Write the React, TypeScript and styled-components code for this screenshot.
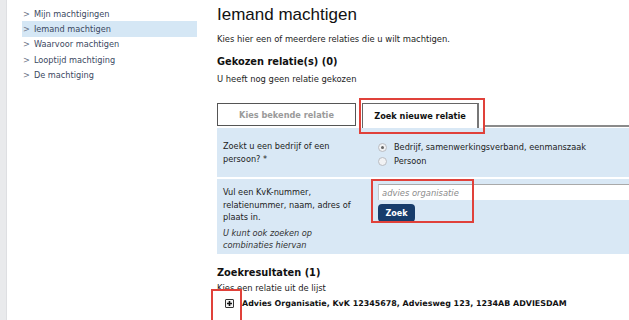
import { FC } from 'react';
import styled, { createGlobalStyle } from 'styled-components';

const GlobalStyle = createGlobalStyle`
  html, body {
    margin: 0;
    padding: 0;
    background: #ffffff;
  }
  body {
    font-family: "DejaVu Sans", Verdana, sans-serif;
    font-size: 8.2px;
    color: #222222;
  }
`;

const Page = styled.div`
  display: flex;
  width: 629px;
  height: 320px;
  overflow: hidden;
`;

const Strip = styled.div`
  width: 6px;
  flex-shrink: 0;
  background: #e9eaec;
  border-right: 1px solid #dedfe2;
`;

const Sidebar = styled.nav`
  width: 195px;
  flex-shrink: 0;
  padding: 6px 0 0 15px;
`;

const NavItem = styled.div<{ $active?: boolean }>`
  width: 175px;
  height: 15.3px;
  display: flex;
  align-items: center;
  gap: 4px;
  padding-left: 1px;
  box-sizing: border-box;
  color: #3b4861;
  font-size: 8.2px;
  background: ${(p) => (p.$active ? '#d5e7f5' : 'transparent')};
`;

const Chevron = styled.span`
  color: #6b7487;
`;

const Main = styled.main`
  flex: 1;
  min-width: 0;
  padding-top: 5px;
  position: relative;
`;

const Title = styled.h1`
  margin: 0;
  font-family: "Liberation Sans", Arial, sans-serif;
  font-weight: normal;
  font-size: 17px;
  line-height: 20px;
  color: #111111;
`;

const Text = styled.p<{ $mt?: number }>`
  margin: ${(p) => p.$mt ?? 0}px 0 0;
  font-size: 8.4px;
  line-height: 14px;
  color: #222222;
`;

const Heading = styled.h2<{ $mt?: number }>`
  margin: ${(p) => p.$mt ?? 0}px 0 0;
  font-size: 9.8px;
  line-height: 14px;
  font-weight: bold;
  color: #111111;
`;

const TabBar = styled.div`
  margin-top: 17px;
  height: 24px;
  display: flex;
  align-items: flex-end;
  gap: 6px;
  &::after {
    content: '';
    flex: 1;
    height: 0;
    border-bottom: 2px solid #8a8a8a;
  }
`;

const Tab = styled.div<{ $active?: boolean }>`
  box-sizing: border-box;
  display: flex;
  align-items: center;
  justify-content: center;
  font-weight: bold;
  font-size: 8.2px;
  ${(p) =>
    p.$active
      ? `
    width: 117px;
    height: 25px;
    color: #111111;
    background: #ffffff;
    border: 1px solid #666666;
    border-bottom: none;
    border-right: 2px solid #777777;
    margin-bottom: -1px;
  `
      : `
    width: 139px;
    height: 23px;
    color: #9a9a9a;
    background: #ffffff;
    border: 1px solid #555555;
    margin-bottom: 1px;
  `}
`;

const Panel = styled.div`
  margin-top: 1px;
  background: #d9e8f5;
`;

const Row = styled.div<{ $pt: number; $pb: number }>`
  display: grid;
  grid-template-columns: 160px 1fr;
  padding: ${(p) => p.$pt}px 0 ${(p) => p.$pb}px;
  & + & {
    border-top: 2px solid #ffffff;
  }
`;

const Label = styled.div<{ $pt?: number }>`
  padding: ${(p) => p.$pt ?? 0}px 0 0 6px;
  line-height: 12.5px;
  color: #222222;
`;

const Hint = styled.div`
  margin-top: 3px;
  font-style: italic;
  color: #333333;
`;

const RadioGroup = styled.div`
  padding: 1px 0 0 1px;
  display: flex;
  flex-direction: column;
  gap: 2px;
`;

const RadioLine = styled.label`
  display: flex;
  align-items: center;
  gap: 7px;
  line-height: 12px;
`;

const RadioDot = styled.span<{ $checked?: boolean }>`
  width: 7px;
  height: 7px;
  border-radius: 50%;
  border: 1px solid #b9bcc2;
  background: #f1f2f4;
  display: flex;
  align-items: center;
  justify-content: center;
  &::after {
    content: '';
    width: 3px;
    height: 3px;
    border-radius: 50%;
    background: ${(p) => (p.$checked ? '#666666' : 'transparent')};
  }
`;

const SearchField = styled.div`
  display: flex;
  flex-direction: column;
  align-items: flex-start;
  gap: 4px;
  padding-left: 1px;
`;

const Input = styled.div`
  box-sizing: border-box;
  width: 100%;
  height: 16px;
  background: #ffffff;
  border-top: 1px solid #a9a9a9;
  border-left: 1px solid #c8c8c8;
  padding-left: 3px;
  display: flex;
  align-items: center;
  font-style: italic;
  font-size: 8.4px;
  color: #8c8c8c;
`;

const Button = styled.button`
  width: 37px;
  height: 18px;
  border: none;
  border-radius: 4px;
  background: #173c6b;
  color: #ffffff;
  font-family: "DejaVu Sans", Verdana, sans-serif;
  font-weight: bold;
  font-size: 8px;
  padding: 0;
`;

const ResultRow = styled.div`
  margin-top: 3px;
  display: flex;
  align-items: center;
  gap: 8px;
  padding-left: 8px;
  font-weight: bold;
  font-size: 7.95px;
  color: #111111;
  line-height: 12px;
`;

const PlusBox = styled.span`
  width: 9px;
  height: 9px;
  box-sizing: border-box;
  border: 1px solid #333333;
  border-radius: 1px;
  background: #f4f4f4;
  display: flex;
  align-items: center;
  justify-content: center;
`;

const Marker = styled.div<{ $x: number; $y: number; $w: number; $h: number }>`
  position: absolute;
  left: ${(p) => p.$x}px;
  top: ${(p) => p.$y}px;
  width: ${(p) => p.$w}px;
  height: ${(p) => p.$h}px;
  box-sizing: border-box;
  border: 2px solid #e0413a;
  pointer-events: none;
`;

const navItems = [
  'Mijn machtigingen',
  'Iemand machtigen',
  'Waarvoor machtigen',
  'Looptijd machtiging',
  'De machtiging',
];

const App: FC = () => (
  <>
    <GlobalStyle />
    <Page>
      <Strip />
      <Sidebar>
        {navItems.map((item, i) => (
          <NavItem key={item} $active={i === 1}>
            <Chevron>&gt;</Chevron>
            {item}
          </NavItem>
        ))}
      </Sidebar>
      <Main>
        <Title>Iemand machtigen</Title>
        <Text $mt={7}>Kies hier een of meerdere relaties die u wilt machtigen.</Text>
        <Heading $mt={9}>Gekozen relatie(s) (0)</Heading>
        <Text $mt={3}>U heeft nog geen relatie gekozen</Text>

        <TabBar>
          <Tab>Kies bekende relatie</Tab>
          <Tab $active>Zoek nieuwe relatie</Tab>
        </TabBar>

        <Panel>
          <Row $pt={12} $pb={10}>
            <Label>
              Zoekt u een bedrijf of een
              <br />
              persoon? *
            </Label>
            <RadioGroup>
              <RadioLine>
                <RadioDot $checked />
                Bedrijf, samenwerkingsverband, eenmanszaak
              </RadioLine>
              <RadioLine>
                <RadioDot />
                Persoon
              </RadioLine>
            </RadioGroup>
          </Row>
          <Row $pt={5} $pb={2}>
            <Label $pt={2}>
              Vul een KvK-nummer,
              <br />
              relatienummer, naam, adres of
              <br />
              plaats in.
              <Hint>
                U kunt ook zoeken op
                <br />
                combinaties hiervan
              </Hint>
            </Label>
            <SearchField>
              <Input>advies organisatie</Input>
              <Button type="button">Zoek</Button>
            </SearchField>
          </Row>
        </Panel>

        <Heading $mt={12}>Zoekresultaten (1)</Heading>
        <Text $mt={1}>Kies een relatie uit de lijst</Text>
        <ResultRow>
          <PlusBox>
            <svg width="7" height="7" viewBox="0 0 7 7">
              <path d="M3.5 1v5M1 3.5h5" stroke="#111" strokeWidth="1.6" />
            </svg>
          </PlusBox>
          Advies Organisatie, KvK 12345678, Adviesweg 123, 1234AB ADVIESDAM
        </ResultRow>

        <Marker $x={142} $y={98} $w={126} $h={36} />
        <Marker $x={154} $y={179} $w={103} $h={44} />
        <Marker $x={-6} $y={289} $w={31} $h={40} />
      </Main>
    </Page>
  </>
);

export default App;
